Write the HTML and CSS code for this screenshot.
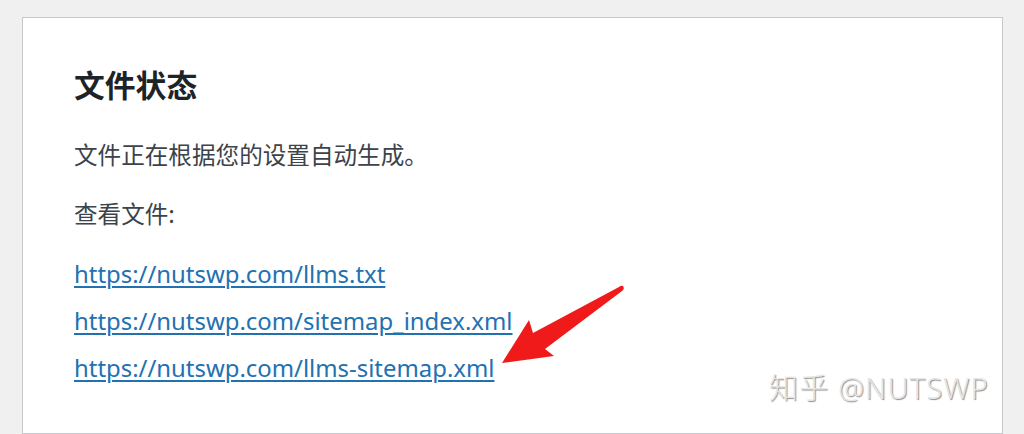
FILE: index.html
```html
<!DOCTYPE html>
<html lang="zh-CN">
<head>
<meta charset="utf-8">
<title>文件状态</title>
<link rel="stylesheet" href="styles.css">
</head>
<body>
<div class="page">
  <section class="card">
    <h2 class="card-title">文件状态</h2>
    <p class="text">文件正在根据您的设置自动生成。</p>
    <p class="text text-second">查看文件:</p>
    <div class="links">
      <a class="file-link" href="#">https://nutswp.com/llms.txt</a>
      <a class="file-link" href="#">https://nutswp.com/sitemap_index.xml</a>
      <a class="file-link" href="#">https://nutswp.com/llms-sitemap.xml</a>
    </div>
    <svg class="arrow" width="140" height="100" viewBox="0 0 140 100" aria-hidden="true">
      <path d="M128 6 Q130 9 127 11 L50 69 L59 76 L7 83 L34 40 L38 53 L124 7 Q126 5 128 6 Z" fill="#f01a1a"/>
    </svg>
    <div class="watermark">知乎 @NUTSWP</div>
  </section>
</div>
</body>
</html>
```
FILE: styles.css
```css
html, body {
  margin: 0;
  padding: 0;
  background: #f0f0f1;
}
body {
  width: 1024px;
  height: 434px;
  overflow: hidden;
  font-family: "Noto Sans", "Noto Sans CJK SC", sans-serif;
}
.page {
  padding: 17px 0 0 22px;
}
.card {
  position: relative;
  box-sizing: border-box;
  width: 981px;
  height: 417px;
  background: #fff;
  border: 1px solid #c7c8cb;
  padding: 47px 51px 0 51px;
}
.card-title {
  margin: 0 0 36px 0;
  font-family: "Noto Sans CJK SC", sans-serif;
  font-size: 30.8px;
  line-height: 38px;
  font-weight: 700;
  color: #1d2327;
}
.text {
  margin: 0;
  font-family: "Noto Sans CJK SC", sans-serif;
  font-size: 23.6px;
  line-height: 30px;
  color: #3c434a;
}
.text-second {
  margin-top: 29px;
}
.links {
  margin-top: 22px;
}
.file-link {
  display: block;
  width: max-content;
  font-family: "Noto Sans", sans-serif;
  font-size: 23.9px;
  line-height: 47px;
  color: #2271b1;
  text-decoration: underline;
  text-decoration-thickness: 1.5px;
  text-underline-offset: 3px;
}
.arrow {
  position: absolute;
  left: 472px;
  top: 262px;
}
.watermark {
  position: absolute;
  left: 746px;
  top: 352px;
  font-family: "Noto Sans", "Noto Sans CJK SC", sans-serif;
  font-size: 29px;
  font-weight: 300;
  letter-spacing: 1.2px;
  line-height: 36px;
  color: #e6e6e6;
  text-shadow: 1px 1px 1px rgba(0, 0, 0, 0.45);
  white-space: nowrap;
}
```
